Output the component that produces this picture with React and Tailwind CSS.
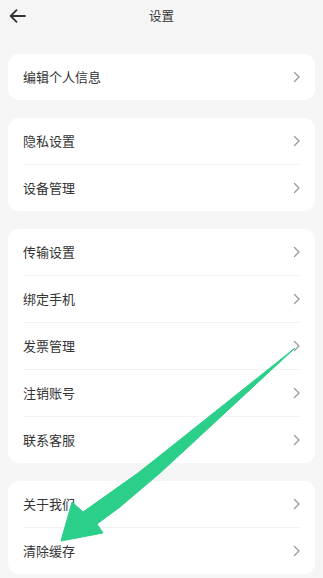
import React from "react";

const groups = [
  ["编辑个人信息"],
  ["隐私设置", "设备管理"],
  ["传输设置", "绑定手机", "发票管理", "注销账号", "联系客服"],
  ["关于我们", "清除缓存"],
];

const Chevron = () => (
  <svg width="8" height="12" viewBox="0 0 8 12" fill="none">
    <path d="M1.5 1.5 L6 6 L1.5 10.5" stroke="#9a9a9a" strokeWidth="1.3" strokeLinecap="round" strokeLinejoin="round" />
  </svg>
);

const App = () => {
  return (
    <div
      className="relative w-[323px] h-[578px] overflow-hidden bg-[#f5f5f5] px-2"
      style={{ fontFamily: '"Noto Sans CJK SC", "Noto Sans", sans-serif' }}
    >
      <div className="grid grid-cols-[1fr_auto_1fr] items-center h-8">
        <div className="pl-[1px]">
          <svg width="17" height="14" viewBox="0 0 17 14" fill="none">
            <path d="M16 7 H2 M7.5 1.2 L1.7 7 L7.5 12.8" stroke="#333" strokeWidth="1.8" strokeLinecap="round" strokeLinejoin="round" />
          </svg>
        </div>
        <div className="text-[12.5px] text-[#333]">设置</div>
        <div />
      </div>

      <div className="mt-[22px] flex flex-col gap-[18px]">
        {groups.map((items, gi) => (
          <div key={gi} className="bg-white rounded-[11px]">
            {items.map((label, i) => (
              <div key={label}>
                {i > 0 ? <div className="mx-[15px] h-px bg-[#f3f3f3]" /> : null}
                <div className="h-[46px] flex items-center justify-between pl-[15px] pr-[14px]">
                  <span className="text-[13px] text-[#333]">{label}</span>
                  <Chevron />
                </div>
              </div>
            ))}
          </div>
        ))}
      </div>

      {/* green pointer drawn over the list */}
      <svg className="absolute left-0 top-0 pointer-events-none" width="323" height="578" viewBox="0 0 323 578">
        <polygon
          points="295,348 185,450 160,473 120,507 97,524 103,533 61,541 72,502 83,512 138,473 167,450"
          fill="#2bcf8a"
          stroke="#2bcf8a"
          strokeWidth="1"
          strokeLinejoin="round"
        />
      </svg>
    </div>
  );
};

export default App;
